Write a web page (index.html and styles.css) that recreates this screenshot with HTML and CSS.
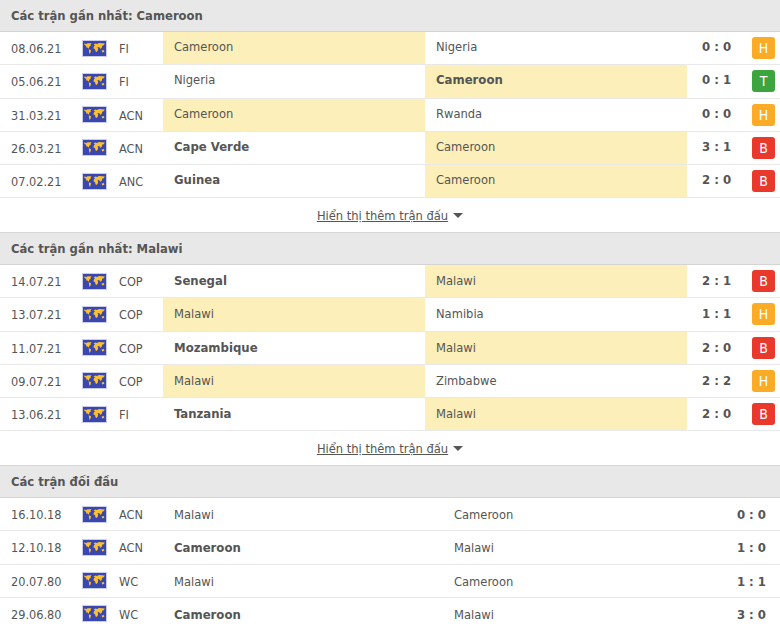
FILE: index.html
```html
<!DOCTYPE html>
<html lang="vi">
<head>
<meta charset="utf-8">
<title>Phong độ</title>
<link rel="stylesheet" href="styles.css">
</head>
<body>
<svg class="defs" width="0" height="0" aria-hidden="true">
  <symbol id="map" viewBox="0 0 25 17">
    <rect x="0.5" y="0.5" width="24" height="16" fill="#3a47ae" stroke="#c9cdea"/>
    <path fill="#fbc02d" d="M2 3.6 L4.5 4 L5.5 3.2 L9.5 3.2 L8.4 5 L9 5.6 L7.4 6.6 L6.8 8.8 L5.6 7.6 L4.6 7.8 L4 5.8 L2.6 5 Z"/>
    <path fill="#fbc02d" d="M6.8 9.2 L9 10.2 L8.6 12.2 L7.6 14 L7.1 12 Z"/>
    <path fill="#fbc02d" d="M11.6 4.6 L13.4 3.4 L15 4 L17 3 L22.8 3.6 L21.8 5.2 L20.4 5.6 L19.8 7.4 L18.6 9 L17.6 7.4 L16.4 7 L15.4 7.4 L16.2 8.6 L15.8 10.4 L14.6 12 L13.6 11.6 L13 9.2 L11.4 8.2 L12 6.2 L13 5.4 Z"/>
    <path fill="#fbc02d" d="M19.6 10.6 L21.8 10 L22.4 11.8 L20.2 12.4 Z"/>
  </symbol>
</svg>

<section class="panel first">
  <h2 class="head">Các trận gần nhất: Cameroon</h2>
  <div class="row"><span class="date">08.06.21</span><svg class="flag"><use href="#map"/></svg><span class="comp">FI</span><span class="team win">Cameroon</span><span class="team">Nigeria</span><span class="score">0 : 0</span><span class="res"><b class="tag h">H</b></span></div>
  <div class="row"><span class="date">05.06.21</span><svg class="flag"><use href="#map"/></svg><span class="comp">FI</span><span class="team">Nigeria</span><span class="team win strong">Cameroon</span><span class="score">0 : 1</span><span class="res"><b class="tag t">T</b></span></div>
  <div class="row"><span class="date">31.03.21</span><svg class="flag"><use href="#map"/></svg><span class="comp">ACN</span><span class="team win">Cameroon</span><span class="team">Rwanda</span><span class="score">0 : 0</span><span class="res"><b class="tag h">H</b></span></div>
  <div class="row"><span class="date">26.03.21</span><svg class="flag"><use href="#map"/></svg><span class="comp">ACN</span><span class="team strong">Cape Verde</span><span class="team win">Cameroon</span><span class="score">3 : 1</span><span class="res"><b class="tag b">B</b></span></div>
  <div class="row"><span class="date">07.02.21</span><svg class="flag"><use href="#map"/></svg><span class="comp">ANC</span><span class="team strong">Guinea</span><span class="team win">Cameroon</span><span class="score">2 : 0</span><span class="res"><b class="tag b">B</b></span></div>
  <div class="more"><a class="more-link" href="#">Hiển thị thêm trận đấu</a><i class="caret"></i></div>
</section>

<section class="panel second">
  <h2 class="head">Các trận gần nhất: Malawi</h2>
  <div class="row"><span class="date">14.07.21</span><svg class="flag"><use href="#map"/></svg><span class="comp">COP</span><span class="team strong">Senegal</span><span class="team win">Malawi</span><span class="score">2 : 1</span><span class="res"><b class="tag b">B</b></span></div>
  <div class="row"><span class="date">13.07.21</span><svg class="flag"><use href="#map"/></svg><span class="comp">COP</span><span class="team win">Malawi</span><span class="team">Namibia</span><span class="score">1 : 1</span><span class="res"><b class="tag h">H</b></span></div>
  <div class="row"><span class="date">11.07.21</span><svg class="flag"><use href="#map"/></svg><span class="comp">COP</span><span class="team strong">Mozambique</span><span class="team win">Malawi</span><span class="score">2 : 0</span><span class="res"><b class="tag b">B</b></span></div>
  <div class="row"><span class="date">09.07.21</span><svg class="flag"><use href="#map"/></svg><span class="comp">COP</span><span class="team win">Malawi</span><span class="team">Zimbabwe</span><span class="score">2 : 2</span><span class="res"><b class="tag h">H</b></span></div>
  <div class="row"><span class="date">13.06.21</span><svg class="flag"><use href="#map"/></svg><span class="comp">FI</span><span class="team strong">Tanzania</span><span class="team win">Malawi</span><span class="score">2 : 0</span><span class="res"><b class="tag b">B</b></span></div>
  <div class="more"><a class="more-link" href="#">Hiển thị thêm trận đấu</a><i class="caret"></i></div>
</section>

<section class="panel third">
  <h2 class="head">Các trận đối đầu</h2>
  <div class="row h2h"><span class="date">16.10.18</span><svg class="flag"><use href="#map"/></svg><span class="comp">ACN</span><span class="team">Malawi</span><span class="team">Cameroon</span><span class="score">0 : 0</span></div>
  <div class="row h2h"><span class="date">12.10.18</span><svg class="flag"><use href="#map"/></svg><span class="comp">ACN</span><span class="team strong">Cameroon</span><span class="team">Malawi</span><span class="score">1 : 0</span></div>
  <div class="row h2h"><span class="date">20.07.80</span><svg class="flag"><use href="#map"/></svg><span class="comp">WC</span><span class="team">Malawi</span><span class="team">Cameroon</span><span class="score">1 : 1</span></div>
  <div class="row h2h"><span class="date">29.06.80</span><svg class="flag"><use href="#map"/></svg><span class="comp">WC</span><span class="team strong">Cameroon</span><span class="team">Malawi</span><span class="score">3 : 0</span></div>
</section>
</body>
</html>
```
FILE: styles.css
```css
html, body { margin: 0; padding: 0; background: #fff; }
body {
  width: 780px;
  height: 630px;
  overflow: hidden;
  font-family: "DejaVu Sans Condensed", "DejaVu Sans", sans-serif;
  font-stretch: condensed;
  font-size: 12.8px;
  color: #555;
}
.defs { position: absolute; }
.head {
  margin: 0;
  height: 32px;
  box-sizing: border-box;
  line-height: 31px;
  padding-left: 11px;
  background: #e8e8e8;
  border-bottom: 1px solid #d4d4d4;
  font-size: 12.9px;
  font-weight: 700;
  color: #555;
}
.third .head { line-height: 32px; }
.row {
  display: grid;
  grid-template-columns: 82px 25px 56px 262px 262px 59px 34px;
  grid-template-rows: 32.25px;
  height: 33.25px;
  box-sizing: border-box;
  border-bottom: 1px solid #e9e9e9;
  align-items: stretch;
}
.h2h { grid-template-columns: 82px 25px 56px 280px 266px 71px; }
.date { padding-left: 11px; font-size: 12.6px; }
.flag { width: 25px; height: 17px; align-self: center; }
.comp { padding-left: 12px; font-size: 12.6px; }
.team { padding-left: 11px; }
.first .date, .first .comp { line-height: 33px; }
.first .team, .first .score { line-height: 30.5px; }
.second .date, .second .comp { line-height: 33px; }
.second .team, .second .score { line-height: 32.5px; }
.third .date, .third .comp, .third .team, .third .score { line-height: 33.5px; }
.win { background: #fcefb9; }
.strong { font-weight: 700; font-size: 13px; }
.score { font-weight: 700; font-size: 13px; text-align: center; }
.h2h .score { text-align: right; padding-right: 14px; }
.res { display: flex; align-items: center; justify-content: flex-end; padding-right: 5px; }
.tag {
  width: 23px;
  height: 22px;
  border-radius: 3px;
  color: #fff;
  font-weight: 400;
  font-size: 14px;
  line-height: 22px;
  text-align: center;
}
.h { background: #fbab25; }
.t { background: #3da53d; }
.b { background: #e8392c; }
.more {
  height: 34.75px;
  box-sizing: border-box;
  display: flex;
  align-items: center;
  justify-content: center;
  gap: 5px;
  border-bottom: 1px solid #d8d8d8;
}
.more-link { color: #555; text-decoration: underline; }
.caret {
  width: 0;
  height: 0;
  border-left: 5px solid transparent;
  border-right: 5px solid transparent;
  border-top: 5px solid #555;
}
```
